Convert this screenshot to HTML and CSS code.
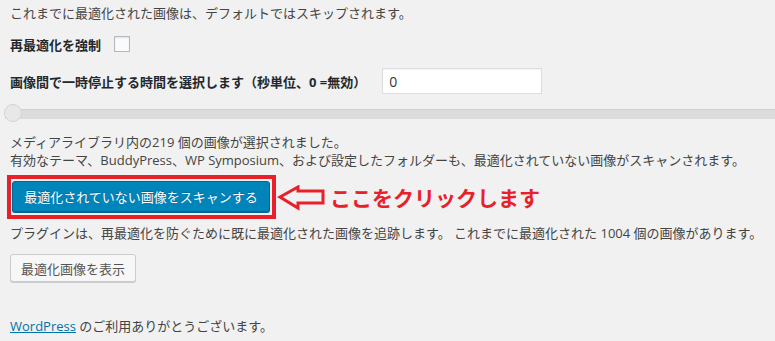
FILE: index.html
```html
<!DOCTYPE html>
<html lang="ja">
<head>
    <meta charset="UTF-8">
    <title>画像の一括最適化</title>
    <link rel="stylesheet" href="styles.css">
</head>
<body>
    <div class="wrap">
        <p class="note">これまでに最適化された画像は、デフォルトではスキップされます。</p>

        <div class="row force">
            <label class="label" for="force">再最適化を強制</label>
            <input type="checkbox" id="force" class="check">
        </div>

        <div class="row delay">
            <label class="label" for="delay">画像間で一時停止する時間を選択します（秒単位、0 =無効）</label>
            <input type="text" id="delay" class="field" value="0">
        </div>
    </div>

    <div class="slider">
        <span class="handle"></span>
    </div>

    <div class="wrap">
        <p class="info">メディアライブラリ内の219 個の画像が選択されました。<br>
        有効なテーマ、BuddyPress、WP Symposium、および設定したフォルダーも、最適化されていない画像がスキャンされます。</p>

        <div class="scan-row">
            <div class="highlight">
                <button class="btn primary">最適化されていない画像をスキャンする</button>
            </div>
            <svg class="arrow" width="50" height="26" viewBox="0 0 50 26">
                <polygon points="3,12 21,2 21,6 46,6 46,18 21,18 21,23" fill="none" stroke="#e8202a" stroke-width="3"/>
            </svg>
            <span class="callout">ここをクリックします</span>
        </div>

        <p class="history">プラグインは、再最適化を防ぐために既に最適化された画像を追跡します。 これまでに最適化された 1004 個の画像があります。</p>

        <button class="btn secondary">最適化画像を表示</button>

        <p class="footer"><a href="#">WordPress</a> のご利用ありがとうございます。</p>
    </div>
</body>
</html>
```

FILE: styles.css
```css
body {
    margin: 0;
    background: #f1f1f1;
    color: #444;
    font-family: "Open Sans", "Noto Sans CJK JP", sans-serif;
    font-size: 13px;
    overflow: hidden;
}

.wrap {
    padding-left: 10px;
}

p {
    margin: 0;
}

.note {
    line-height: 18px;
    padding-top: 4px;
}

.row {
    display: flex;
    align-items: center;
}

.label {
    font-weight: bold;
    color: #23282d;
}

.force {
    margin-top: 13px;
    height: 18px;
}

.check {
    appearance: none;
    width: 16px;
    height: 16px;
    margin: 0 0 0 13px;
    background: #fbfbfb;
    border: 1px solid #b4b9be;
    box-shadow: inset 0 1px 2px rgba(0, 0, 0, 0.1);
}

.delay {
    margin-top: 15px;
    height: 26px;
}

.field {
    width: 160px;
    height: 26px;
    box-sizing: border-box;
    margin-left: 16px;
    padding: 0 6px;
    border: 1px solid #ddd;
    background: #fff;
    color: #32373c;
    font-family: "Open Sans", sans-serif;
    font-size: 14px;
    box-shadow: inset 0 1px 2px rgba(0, 0, 0, 0.05);
}

.slider {
    position: relative;
    margin: 15px 0 0 5px;
    height: 9px;
    background: #dcdcdc;
    border-top: 1px solid #d0d0d0;
}

.handle {
    position: absolute;
    left: -1px;
    top: -6px;
    width: 16px;
    height: 16px;
    border-radius: 50%;
    background: #e8e8e8;
    border: 1px solid #d3d3d3;
}

.info {
    margin-top: 14px;
    line-height: 18px;
}

.scan-row {
    display: flex;
    align-items: center;
    margin-top: 6px;
    margin-left: -3px;
}

.highlight {
    border: 4px solid #e8202a;
    padding: 2px 2px 3px 1px;
}

.btn {
    font-family: "Open Sans", "Noto Sans CJK JP", sans-serif;
    font-size: 13px;
    border-radius: 3px;
    cursor: pointer;
}

.primary {
    display: block;
    width: 258px;
    height: 31px;
    padding: 0;
    background: #0085ba;
    color: #fff;
    border: 1px solid #006799;
    box-shadow: 0 1px 0 #006799;
    text-shadow: 0 -1px 1px #006799;
}

.arrow {
    margin-left: 1px;
    margin-top: 1px;
}

.callout {
    margin-left: 3px;
    color: #e8202a;
    font-family: "Noto Sans CJK JP", sans-serif;
    font-weight: bold;
    font-size: 21px;
    letter-spacing: 0;
}

.history {
    margin-top: 5px;
    line-height: 18px;
}

.secondary {
    margin-top: 12px;
    height: 28px;
    padding: 0 10px;
    background: #f7f7f7;
    color: #555;
    border: 1px solid #ccc;
    box-shadow: 0 1px 0 #ccc;
}

.footer {
    margin-top: 35px;
    line-height: 18px;
}

.footer a {
    color: #0073aa;
}
```
